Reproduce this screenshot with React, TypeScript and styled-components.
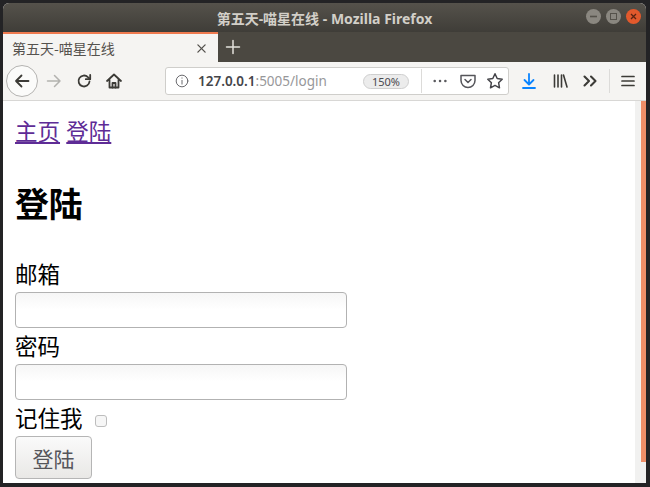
import styled, { createGlobalStyle } from 'styled-components';
import type { ReactNode } from 'react';

const Global = createGlobalStyle`
  html, body { margin: 0; padding: 0; background: #26262a; overflow: hidden; }
  body { font-family: "Liberation Sans", "Noto Sans CJK SC", sans-serif; }
  * { box-sizing: border-box; }
`;

const CJK = '"Noto Sans CJK SC", sans-serif';

const Desktop = styled.div`
  width: 650px;
  height: 487px;
  padding: 3px 4px 4px 3px;
  background: #232325;
`;

const Win = styled.div`
  height: 480px;
  display: flex;
  flex-direction: column;
  border-radius: 6px 6px 0 0;
  overflow: hidden;
  background: #fff;
`;

const TitleBar = styled.div`
  height: 29px;
  flex: none;
  position: relative;
  display: flex;
  align-items: center;
  justify-content: center;
  background: linear-gradient(#55524b, #3f3d38);
  color: #d2cfc8;
  font-size: 14px;
  font-weight: 700;
  font-family: "Noto Sans", ${CJK};
  white-space: nowrap;
`;

const WinButtons = styled.div`
  position: absolute;
  right: 5px;
  top: 6px;
  display: flex;
  gap: 5px;
`;

const WinButton = styled.div<{ $close?: boolean }>`
  width: 15px;
  height: 15px;
  border-radius: 50%;
  display: flex;
  align-items: center;
  justify-content: center;
  background: ${({ $close }) => ($close ? '#e2592c' : '#8a8780')};
`;

const TabBar = styled.div`
  height: 30px;
  flex: none;
  display: flex;
  background: #4b4841;
`;

const Tab = styled.div`
  width: 215px;
  display: flex;
  align-items: center;
  justify-content: space-between;
  padding: 0 10px 0 9px;
  background: #f5f4f2;
  border-top: 2px solid #ef7a4f;
  color: #55524e;
  font-size: 14px;
  font-family: ${CJK};
`;

const NewTab = styled.div`
  width: 30px;
  display: flex;
  align-items: center;
  justify-content: center;
`;

const ToolBar = styled.div`
  height: 39px;
  flex: none;
  display: flex;
  align-items: center;
  padding: 0 0 0 3px;
  background: #f5f4f2;
  border-bottom: 1px solid #d8d7d5;
`;

const IconSlot = styled.div<{ $w?: number }>`
  width: ${({ $w }) => $w ?? 30}px;
  flex: none;
  display: flex;
  align-items: center;
  justify-content: center;
`;

const StarSlot = styled(IconSlot)`
  padding-left: 3px;
`;

const BackCircle = styled.div`
  width: 32px;
  height: 32px;
  flex: none;
  border-radius: 50%;
  border: 1px solid #b4b3b1;
  background: #fbfbfa;
  display: flex;
  align-items: center;
  justify-content: center;
`;

const UrlBar = styled.div`
  width: 344px;
  height: 28px;
  flex: none;
  margin-left: 36px;
  display: flex;
  align-items: center;
  padding: 0 0 0 9px;
  background: #fff;
  border: 1px solid #cfcecb;
  border-radius: 3px;
`;

const UrlText = styled.div`
  margin-left: 9px;
  flex: 1;
  font-size: 13.5px;
  font-family: "Noto Sans", sans-serif;
  color: #97979a;
  white-space: nowrap;
  b { font-weight: 600; color: #45454a; }
`;

const Zoom = styled.div`
  width: 46px;
  height: 15px;
  margin-right: 12px;
  border: 1px solid #cfcfcf;
  border-radius: 8px;
  background: #ececec;
  color: #4a4a4f;
  font-size: 11px;
  font-family: "Noto Sans", sans-serif;
  line-height: 13px;
  text-align: center;
`;

const Sep = styled.div`
  width: 1px;
  height: 24px;
  flex: none;
  background: #dcdbd9;
`;

const Main = styled.div`
  flex: 1;
  min-height: 0;
  display: flex;
`;

const Page = styled.main`
  flex: 1;
  padding: 18px 12px 0;
  color: #000;
  font-family: "Liberation Sans", ${CJK};
  font-size: 22.5px;
  line-height: 28px;
  overflow: hidden;
`;

const Nav = styled.nav`
  height: 28px;
  a { color: #5e2c96; text-decoration: underline; }
`;

const Heading = styled.h1`
  margin: 36px 0 29px;
  height: 44px;
  font-size: 33.75px;
  line-height: 44px;
  font-weight: 700;
`;

const Field = styled.div`
  display: flex;
  flex-direction: column;
  align-items: flex-start;
`;

const Label = styled.label`
  height: 36px;
  padding-top: 3px;
  line-height: 33px;
`;

const TextInput = styled.div`
  width: 332px;
  height: 36px;
  border: 1px solid #b2b2b2;
  border-radius: 4px;
  background: linear-gradient(#f6f6f6, #fff 50%);
`;

const RememberRow = styled.div`
  height: 36px;
  padding-top: 4px;
  display: flex;
  align-items: center;
  gap: 12px;
`;

const Check = styled.div`
  width: 12px;
  height: 12px;
  margin-top: 1px;
  border: 1px solid #bdbdbd;
  border-radius: 3px;
  background: #f6f6f6;
`;

const Submit = styled.button`
  display: block;
  width: 77px;
  height: 43px;
  padding: 0;
  border: 1px solid #b5b5b5;
  border-radius: 4px;
  background: linear-gradient(#fafafa, #e9e8e6);
  color: #55555a;
  font-size: 21px;
  font-family: ${CJK};
`;

const ScrollTrack = styled.div`
  width: 11px;
  flex: none;
  display: flex;
  justify-content: flex-end;
  background: #f1f1f0;
`;

const ScrollThumb = styled.div`
  width: 5px;
  height: 361px;
  background: #ee8e68;
`;

const Ico = ({ children, w = 18, color = '#3c3b37', sw = 1.8 }: { children: ReactNode; w?: number; color?: string; sw?: number }) => (
  <svg width={w} height={w} viewBox="0 0 18 18" fill="none" stroke={color} strokeWidth={sw} strokeLinecap="round" strokeLinejoin="round">
    {children}
  </svg>
);

const App = () => (
  <Desktop>
    <Global />
    <Win>
      <TitleBar>
        第五天-喵星在线 - Mozilla Firefox
        <WinButtons>
          <WinButton>
            <svg width="9" height="9" viewBox="0 0 9 9"><rect x="1" y="3.7" width="7" height="1.6" fill="#55524b" /></svg>
          </WinButton>
          <WinButton>
            <svg width="9" height="9" viewBox="0 0 9 9"><rect x="1.5" y="1.5" width="6" height="6" fill="none" stroke="#55524b" /></svg>
          </WinButton>
          <WinButton $close>
            <svg width="9" height="9" viewBox="0 0 9 9"><path d="M2 2l5 5M7 2l-5 5" stroke="#5a2412" strokeWidth="1.3" /></svg>
          </WinButton>
        </WinButtons>
      </TitleBar>
      <TabBar>
        <Tab>
          第五天-喵星在线
          <Ico w={13} color="#55524e"><path d="M4 4l10 10M14 4L4 14" /></Ico>
        </Tab>
        <NewTab>
          <Ico w={18} color="#e4e2dc" sw={1.5}><path d="M9 2.5v13M2.5 9h13" /></Ico>
        </NewTab>
      </TabBar>
      <ToolBar>
        <BackCircle>
          <Ico><path d="M15.5 9H3M8.5 3.5L3 9l5.5 5.5" /></Ico>
        </BackCircle>
        <IconSlot $w={31}>
          <Ico color="#b3b2af" sw={1.5}><path d="M2.5 9H15M9.5 3.5L15 9l-5.5 5.5" /></Ico>
        </IconSlot>
        <IconSlot $w={30}>
          <Ico><path d="M14.5 9.5a5.5 5.5 0 1 1-1.6-4.4L15 7" /><path d="M15.2 2.8V7.2H10.8" /></Ico>
        </IconSlot>
        <IconSlot $w={30}>
          <Ico><path d="M2 9l7-6.5L16 9M4.5 7.5V15.5h9V7.5" /><path d="M7.5 15.5v-4.5h3v4.5" /></Ico>
        </IconSlot>
        <UrlBar>
          <Ico w={14} color="#5f5f63" sw={1.2}>
            <circle cx="9" cy="9" r="7.5" />
            <path d="M9 8.2v4.8M9 5v.4" />
          </Ico>
          <UrlText><b>127.0.0.1</b>:5005/login</UrlText>
          <Zoom>150%</Zoom>
          <Sep />
          <IconSlot $w={36}>
            <Ico w={16} color="#5a5a5e" sw={2.8}><path d="M3 9h.1M9 9h.1M15 9h.1" /></Ico>
          </IconSlot>
          <IconSlot $w={20}>
            <Ico color="#55555a" sw={1.5}><path d="M2 3.5h14v5a7 7 0 0 1-14 0z" /><path d="M6 7.5l3 3 3-3" /></Ico>
          </IconSlot>
          <StarSlot $w={30}>
            <Ico color="#45454a" sw={1.5}><path d="M9 1.8l2.2 4.7 5 .7-3.6 3.5.9 5.1L9 13.4l-4.5 2.4.9-5.1-3.6-3.5 5-.7z" /></Ico>
          </StarSlot>
        </UrlBar>
        <IconSlot $w={40}>
          <Ico color="#0a84ff"><path d="M9 2v10M4.5 8L9 12.5 13.5 8M3 16h12" /></Ico>
        </IconSlot>
        <IconSlot $w={22}>
          <Ico sw={1.6}><path d="M3.5 3v12M7 3v12M10.5 3v12M12.5 3l3.5 12" /></Ico>
        </IconSlot>
        <IconSlot $w={38}>
          <Ico sw={2.1}><path d="M3.5 4.5L8 9l-4.5 4.5M10 4.5L14.5 9 10 13.5" /></Ico>
        </IconSlot>
        <Sep />
        <IconSlot $w={36}>
          <Ico sw={1.7}><path d="M3 4.5h12M3 9h12M3 13.5h12" /></Ico>
        </IconSlot>
      </ToolBar>
      <Main>
        <Page>
          <Nav><a href="#home">主页</a> <a href="#login">登陆</a></Nav>
          <Heading>登陆</Heading>
          <form>
            <Field>
              <Label>邮箱</Label>
              <TextInput />
            </Field>
            <Field>
              <Label>密码</Label>
              <TextInput />
            </Field>
            <RememberRow>
              <span>记住我</span>
              <Check />
            </RememberRow>
            <Submit type="button">登陆</Submit>
          </form>
        </Page>
        <ScrollTrack><ScrollThumb /></ScrollTrack>
      </Main>
    </Win>
  </Desktop>
);

export default App;
